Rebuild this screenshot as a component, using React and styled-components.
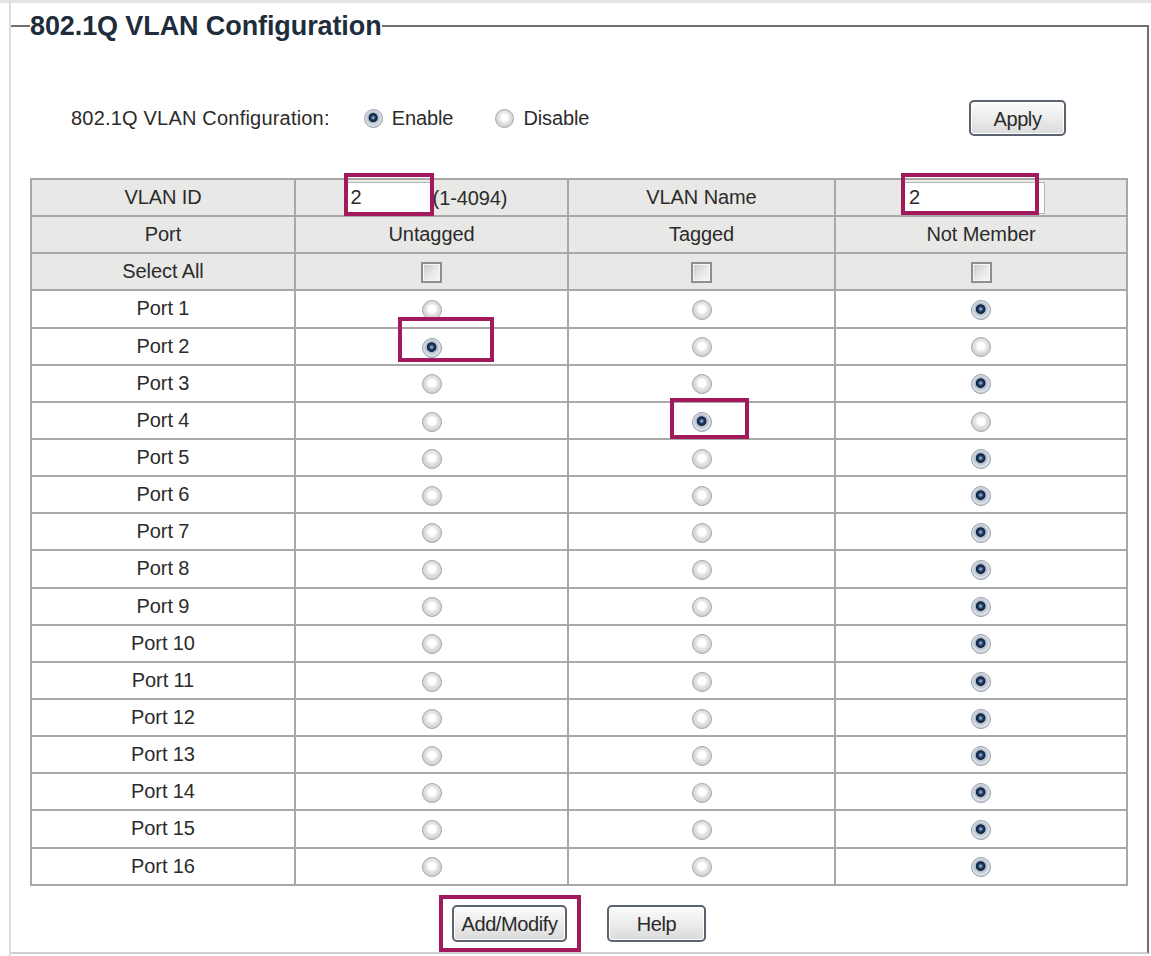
import React from "react";
import styled, { createGlobalStyle, css } from "styled-components";

const GlobalStyle = createGlobalStyle`
  html, body {
    margin: 0;
    padding: 0;
    background: #fff;
  }
  body {
    font-family: "Liberation Sans", Arial, sans-serif;
    color: #2b2b2b;
  }
`;

const Page = styled.div`
  border-top: 3px solid #e3e3e3;
  padding: 0 2px 0 9px;
  height: 953px;
`;

const Frame = styled.div`
  border-left: 2px solid #dcdcdc;
  height: 100%;
  padding-top: 8px;
  box-sizing: border-box;
`;

const Fieldset = styled.fieldset`
  margin: 0;
  padding: 0 0 10px 0;
  border: none;
  border-top: 2px solid #707070;
  border-right: 2px solid #707070;
  border-bottom: 2px solid #cfcfcf;
  min-width: 0;
`;

const Legend = styled.legend`
  margin-left: 19px;
  padding: 0;
  font-size: 27px;
  line-height: 30px;
  font-weight: bold;
  color: #1e2c3c;
  letter-spacing: -0.1px;
`;

const ControlRow = styled.div`
  display: flex;
  align-items: center;
  height: 36px;
  margin: 59px 81px 0 60px;
  font-size: 20px;
  letter-spacing: -0.1px;
`;

const ControlLabel = styled.span`
  margin-right: 34px;
  letter-spacing: 0.2px;
`;

const RadioLabel = styled.label`
  display: inline-flex;
  align-items: center;
  gap: 9px;
  margin-right: 42px;
`;

const Spacer = styled.div`
  flex: 1;
`;

const Button = styled.button`
  width: ${(p) => p.$w}px;
  height: ${(p) => p.$h}px;
  font-family: "Liberation Sans", Arial, sans-serif;
  font-size: 20px;
  color: #2a2a2a;
  letter-spacing: -0.4px;
  border: 2px solid #5b6270;
  border-radius: 5px;
  background: linear-gradient(#fbfbfb 0%, #ececec 50%, #dadada 100%);
  box-shadow: inset 0 0 0 1px #fff;
  padding: 3px 0 0;
`;

const Table = styled.table`
  margin: 42px auto 0;
  width: 1096px;
  border-collapse: collapse;
  table-layout: fixed;
  font-size: 20px;
  letter-spacing: -0.1px;
`;

const Row = styled.tr`
  height: 37.15px;
`;

const Cell = styled.td`
  border: 2px solid #a8a8a8;
  padding: 0;
  text-align: center;
  vertical-align: middle;
  background: ${(p) => (p.$head ? "#e8e8e6" : "#fff")};
  ${(p) =>
    p.$pad &&
    css`
      padding-right: ${p.$pad}px;
    `}
`;

const Range = styled.span`
  vertical-align: middle;
`;

const TextInput = styled.input`
  width: ${(p) => p.$w}px;
  height: 32px;
  box-sizing: border-box;
  border: 1px solid #b5b5b5;
  background: #fff;
  font-family: "Liberation Sans", Arial, sans-serif;
  font-size: 20px;
  color: #2a2a2a;
  padding: 0 0 0 4px;
  margin: 0 1px 0 0;
  vertical-align: middle;
`;

const Marked = styled.span`
  position: relative;
  display: inline-block;
  vertical-align: middle;

  &::after {
    content: "";
    position: absolute;
    top: ${(p) => p.$t}px;
    left: ${(p) => p.$l}px;
    right: ${(p) => p.$r}px;
    bottom: ${(p) => p.$b}px;
    border: 4px solid #a31a5c;
    pointer-events: none;
  }
`;

const Radio = styled.span`
  display: inline-block;
  width: ${(p) => p.$size || 20}px;
  height: ${(p) => p.$size || 20}px;
  border-radius: 50%;
  box-sizing: border-box;
  vertical-align: middle;
  border: 1px solid #a8a8a8;
  ${(p) =>
    p.$on
      ? css`
          border-color: #96a0ae;
          background: radial-gradient(
            circle at 48% 45%,
            #7f9fc3 0 7%,
            #22406a 17%,
            #0f1f36 32%,
            #aeb8c6 38%,
            #dde2e8 60%,
            #b3bac4 100%
          );
        `
      : css`
          background: radial-gradient(
            circle at 50% 45%,
            #ffffff 0 26%,
            #e4e4e4 44%,
            #d0d0d0 72%,
            #bcbcbc 100%
          );
        `}
`;

const Checkbox = styled.span`
  display: inline-block;
  width: 21px;
  height: 21px;
  box-sizing: border-box;
  vertical-align: middle;
  border: 2px solid #8f8f8f;
  background: linear-gradient(135deg, #c6c6c6 0%, #e9e9e9 55%, #f7f7f7 100%);
  box-shadow: inset 0 0 0 1px #f6f6f6;
`;

const ButtonRow = styled.div`
  display: flex;
  justify-content: center;
  align-items: center;
  gap: 40px;
  margin-top: 19px;
`;

const ports = Array.from({ length: 16 }, (_, i) => {
  const n = i + 1;
  let mode = "none";
  if (n === 2) mode = "untagged";
  if (n === 4) mode = "tagged";
  return { name: `Port ${n}`, mode };
});

const PortRow = ({ port }) => {
  const untagged = <Radio $on={port.mode === "untagged"} />;
  const tagged = <Radio $on={port.mode === "tagged"} />;
  return (
    <Row>
      <Cell>{port.name}</Cell>
      <Cell>
        {port.mode === "untagged" ? (
          <Marked $t={-18} $l={-24} $r={-52} $b={-4}>
            {untagged}
          </Marked>
        ) : (
          untagged
        )}
      </Cell>
      <Cell>
        {port.mode === "tagged" ? (
          <Marked $t={-12} $l={-22} $r={-37} $b={-6}>
            {tagged}
          </Marked>
        ) : (
          tagged
        )}
      </Cell>
      <Cell>
        <Radio $on={port.mode === "none"} />
      </Cell>
    </Row>
  );
};

export default function App() {
  return (
    <>
      <GlobalStyle />
      <Page>
        <Frame>
          <Fieldset>
            <Legend>802.1Q VLAN Configuration</Legend>
            <ControlRow>
              <ControlLabel>802.1Q VLAN Configuration:</ControlLabel>
              <RadioLabel>
                <Radio $on $size={19} />
                Enable
              </RadioLabel>
              <RadioLabel>
                <Radio $size={19} />
                Disable
              </RadioLabel>
              <Spacer />
              <Button $w={97} $h={36}>
                Apply
              </Button>
            </ControlRow>

            <Table>
              <colgroup>
                <col style={{ width: 264 }} />
                <col style={{ width: 273 }} />
                <col style={{ width: 267 }} />
                <col style={{ width: 292 }} />
              </colgroup>
              <tbody>
                <Row>
                  <Cell $head>VLAN ID</Cell>
                  <Cell $head $pad={10}>
                    <Marked $t={-9} $l={-2} $r={-1} $b={-2}>
                      <TextInput $w={86} defaultValue="2" />
                    </Marked>
                    <Range>(1-4094)</Range>
                  </Cell>
                  <Cell $head>VLAN Name</Cell>
                  <Cell $head $pad={12}>
                    <Marked $t={-9} $l={-3} $r={7} $b={-1}>
                      <TextInput $w={141} defaultValue="2" />
                    </Marked>
                  </Cell>
                </Row>
                <Row>
                  <Cell $head>Port</Cell>
                  <Cell $head>Untagged</Cell>
                  <Cell $head>Tagged</Cell>
                  <Cell $head>Not Member</Cell>
                </Row>
                <Row>
                  <Cell $head>Select All</Cell>
                  <Cell $head>
                    <Checkbox />
                  </Cell>
                  <Cell $head>
                    <Checkbox />
                  </Cell>
                  <Cell $head>
                    <Checkbox />
                  </Cell>
                </Row>
                {ports.map((p) => (
                  <PortRow key={p.name} port={p} />
                ))}
              </tbody>
            </Table>

            <ButtonRow>
              <Marked $t={-10} $l={-13} $r={-14} $b={-10}>
                <Button $w={115} $h={37}>
                  Add/Modify
                </Button>
              </Marked>
              <Button $w={99} $h={37}>
                Help
              </Button>
            </ButtonRow>
          </Fieldset>
        </Frame>
      </Page>
    </>
  );
}
